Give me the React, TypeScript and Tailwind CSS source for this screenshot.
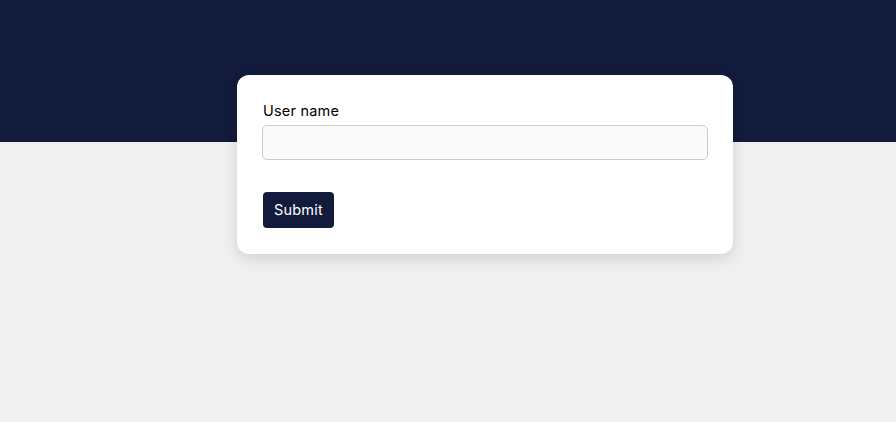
import React from 'react';

export default function App() {
    return (
        <div className="min-h-[422px] bg-[#f0f0f0] font-['Inter','Open_Sans',sans-serif]">
            {/* Top band */}
            <div className="h-[142px] bg-[#131b3d]"></div>

            {/* Form card */}
            <div className="-mt-[67px] ml-[237px] w-[496px] rounded-xl bg-white px-[25px] pt-[25px] pb-[26px] shadow-[0_5px_14px_rgba(0,0,0,0.13)]">
                <label className="block pl-px text-[14.5px] leading-[22px] tracking-[0.2px] text-black">User name</label>
                <input
                    type="text"
                    className="mt-[3px] block h-[35px] w-full rounded-[5px] border border-[#cccccc] bg-[#fafafa] px-3 outline-none"
                />
                <button className="mt-[32px] ml-px h-[36px] rounded-[4px] bg-[#131b3d] px-[11px] text-[14.5px] tracking-[0.2px] text-white">
                    Submit
                </button>
            </div>
        </div>
    );
}
